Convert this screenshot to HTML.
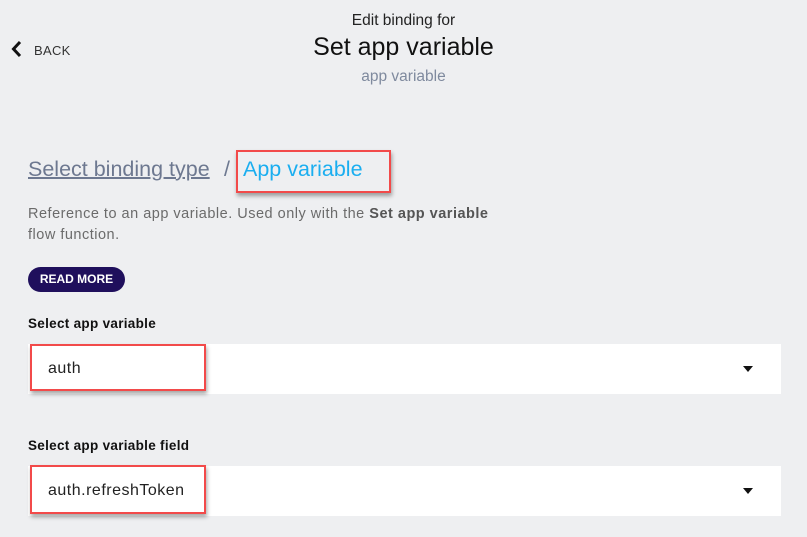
<!DOCTYPE html>
<html><head><meta charset="utf-8"><style>
*{margin:0;padding:0;box-sizing:border-box}
body{width:807px;height:537px;background:#eeeff1;font-family:"Liberation Sans",sans-serif;position:relative;overflow:hidden;color:#1a1a1a}
.a{position:absolute;white-space:nowrap}
.red{position:absolute;border:2.5px solid #f24a4a;box-shadow:1px 3px 4px rgba(0,0,0,.35)}
.box{position:absolute;left:28px;width:753px;height:50px;background:#fff}
.tri{position:absolute;right:28px;top:22px;width:0;height:0;border-left:5px solid transparent;border-right:5px solid transparent;border-top:6px solid #111}
.lbl{font-size:13.5px;font-weight:bold;letter-spacing:.3px;color:#111}
.val{font-size:16px;letter-spacing:.5px;color:#222}
</style></head><body>
<svg class="a" style="left:10px;top:40px" width="14" height="18" viewBox="0 0 14 18"><path d="M10 2 L3.5 9 L10 16" fill="none" stroke="#111" stroke-width="3"/></svg>
<div class="a" style="left:34px;top:43px;font-size:13px;color:#333;letter-spacing:.3px">BACK</div>
<div class="a" style="left:0;width:807px;text-align:center;top:12px;font-size:15.5px;color:#222">Edit binding for</div>
<div class="a" style="left:0;width:807px;text-align:center;top:33px;font-size:25px;color:#111">Set app variable</div>
<div class="a" style="left:0;width:807px;text-align:center;top:68px;font-size:15.5px;color:#7f8a9e">app variable</div>
<div class="a" style="left:28px;top:157px;font-size:21.5px;color:#6d7890;text-decoration:underline;text-decoration-thickness:1.5px">Select binding type</div>
<div class="a" style="left:224px;top:157px;font-size:21.5px;color:#6d7890">/</div>
<div class="a" style="left:243px;top:157px;font-size:21.5px;color:#1aaef0">App variable</div>
<div class="red" style="left:236px;top:150px;width:155px;height:43px"></div>
<div class="a" style="left:28px;top:204px;font-size:14.5px;letter-spacing:.5px;color:#6b6b6b;line-height:21px">Reference to an app variable. Used only with the <b style="color:#555">Set app variable</b><br>flow function.</div>
<div class="a" style="left:28px;top:267px;width:97px;height:25px;border-radius:13px;background:#1f0f5c;color:#fff;font-size:12px;font-weight:bold;text-align:center;line-height:25px">READ MORE</div>
<div class="a lbl" style="left:28px;top:316px">Select app variable</div>
<div class="box" style="top:344px"><div class="tri"></div></div>
<div class="a val" style="left:48px;top:360px">auth</div>
<div class="red" style="left:30px;top:344px;width:176px;height:47px"></div>
<div class="a lbl" style="left:28px;top:438px">Select app variable field</div>
<div class="box" style="top:466px"><div class="tri"></div></div>
<div class="a val" style="left:48px;top:482px">auth.refreshToken</div>
<div class="red" style="left:30px;top:465px;width:176px;height:49px"></div>
</body></html>
